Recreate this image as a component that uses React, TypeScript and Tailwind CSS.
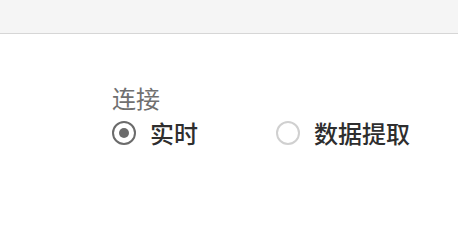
export default function App() {
  return (
    <div className="w-[458px] h-[218px] bg-white" style={{ fontFamily: '"Noto Sans CJK SC", sans-serif' }}>
      <div className="h-[34px] bg-[#f5f5f5] border-b border-[#d6d6d6]" />
      <div className="pl-[112px] pt-[52px]">
        <div className="text-[24px] leading-[24px] text-[#707070]">连接</div>
        <div className="flex items-center mt-[11px]">
          <label className="flex items-center w-[164px]">
            <span className="w-[24px] h-[24px] rounded-full border-2 border-[#6b6b6b] flex items-center justify-center">
              <span className="w-[10px] h-[10px] rounded-full bg-[#6b6b6b]" />
            </span>
            <span className="ml-[14px] text-[24px] leading-[24px] font-medium text-[#2e2e2e]">实时</span>
          </label>
          <label className="flex items-center">
            <span className="w-[24px] h-[24px] rounded-full border-2 border-[#d0d0d0]" />
            <span className="ml-[14px] text-[24px] leading-[24px] font-medium text-[#2e2e2e]">数据提取</span>
          </label>
        </div>
      </div>
    </div>
  );
}
